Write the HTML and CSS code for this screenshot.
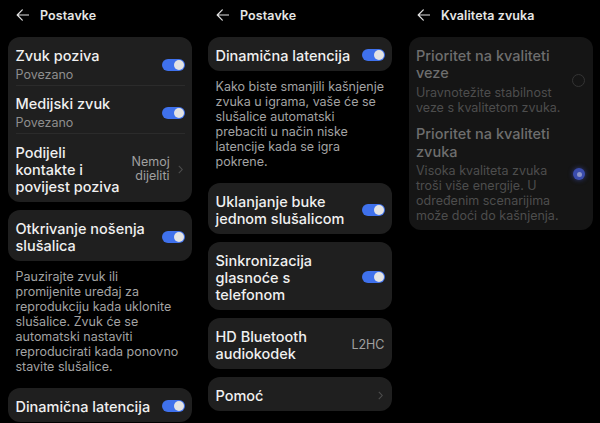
FILE: index.html
```html
<!DOCTYPE html>
<html lang="hr">
<head>
<meta charset="utf-8">
<title>Postavke</title>
<link rel="stylesheet" href="styles.css">
</head>
<body>
<div class="screens">

  <section class="screen">
    <header class="appbar">
      <svg class="back" width="13" height="12" viewBox="0 0 13 12"><path d="M12.5 6H1.2M6.3 0.9L1.2 6l5.1 5.1" fill="none" stroke="#e0e0e0" stroke-width="1.2" stroke-linecap="round" stroke-linejoin="round"/></svg>
      <h1 class="appbar-title">Postavke</h1>
    </header>
    <div class="card">
      <div class="row row-sub">
        <div class="text"><div class="title">Zvuk poziva</div><div class="sub">Povezano</div></div>
        <span class="switch"></span>
      </div>
      <div class="row row-sub">
        <div class="text"><div class="title">Medijski zvuk</div><div class="sub">Povezano</div></div>
        <span class="switch"></span>
      </div>
      <div class="row">
        <div class="text narrow"><div class="title">Podijeli kontakte i povijest poziva</div></div>
        <span class="value wrap">Nemoj dijeliti</span>
        <svg class="chev" width="5" height="9" viewBox="0 0 5 9"><path d="M0.8 0.8L4.2 4.5L0.8 8.2" fill="none" stroke="#4d4d4d" stroke-width="1.1"/></svg>
      </div>
    </div>
    <div class="card">
      <div class="row">
        <div class="text"><div class="title">Otkrivanje nošenja slušalica</div></div>
        <span class="switch"></span>
      </div>
    </div>
    <p class="note">Pauzirajte zvuk ili promijenite uređaj za reprodukciju kada uklonite slušalice. Zvuk će se automatski nastaviti reproducirati kada ponovno stavite slušalice.</p>
    <div class="card">
      <div class="row">
        <div class="text"><div class="title">Dinamična latencija</div></div>
        <span class="switch"></span>
      </div>
    </div>
  </section>

  <section class="screen">
    <header class="appbar">
      <svg class="back" width="13" height="12" viewBox="0 0 13 12"><path d="M12.5 6H1.2M6.3 0.9L1.2 6l5.1 5.1" fill="none" stroke="#e0e0e0" stroke-width="1.2" stroke-linecap="round" stroke-linejoin="round"/></svg>
      <h1 class="appbar-title">Postavke</h1>
    </header>
    <div class="card">
      <div class="row">
        <div class="text"><div class="title">Dinamična latencija</div></div>
        <span class="switch"></span>
      </div>
    </div>
    <p class="note">Kako biste smanjili kašnjenje zvuka u igrama, vaše će se slušalice automatski prebaciti u način niske latencije kada se igra pokrene.</p>
    <div class="card">
      <div class="row">
        <div class="text"><div class="title">Uklanjanje buke jednom slušalicom</div></div>
        <span class="switch"></span>
      </div>
    </div>
    <div class="card">
      <div class="row">
        <div class="text"><div class="title">Sinkronizacija glasnoće s telefonom</div></div>
        <span class="switch"></span>
      </div>
    </div>
    <div class="card">
      <div class="row">
        <div class="text"><div class="title">HD Bluetooth audiokodek</div></div>
        <span class="value">L2HC</span>
      </div>
    </div>
    <div class="card">
      <div class="row">
        <div class="text"><div class="title">Pomoć</div></div>
        <svg class="chev" width="5" height="9" viewBox="0 0 5 9"><path d="M0.8 0.8L4.2 4.5L0.8 8.2" fill="none" stroke="#4d4d4d" stroke-width="1.1"/></svg>
      </div>
    </div>
  </section>

  <section class="screen">
    <header class="appbar">
      <svg class="back" width="13" height="12" viewBox="0 0 13 12"><path d="M12.5 6H1.2M6.3 0.9L1.2 6l5.1 5.1" fill="none" stroke="#e0e0e0" stroke-width="1.2" stroke-linecap="round" stroke-linejoin="round"/></svg>
      <h1 class="appbar-title">Kvaliteta zvuka</h1>
    </header>
    <div class="card card-disabled">
      <div class="option">
        <div class="option-text">
          <div class="option-title">Prioritet na kvaliteti veze</div>
          <div class="option-sub">Uravnotežite stabilnost veze s kvalitetom zvuka.</div>
        </div>
        <span class="radio"></span>
      </div>
      <div class="option">
        <div class="option-text">
          <div class="option-title">Prioritet na kvaliteti zvuka</div>
          <div class="option-sub">Visoka kvaliteta zvuka troši više energije. U određenim scenarijima može doći do kašnjenja.</div>
        </div>
        <span class="radio radio-on"></span>
      </div>
    </div>
  </section>

</div>
</body>
</html>
```

FILE: styles.css
```css
html, body {
  margin: 0;
  padding: 0;
  background: #000;
}

body {
  width: 600px;
  height: 423px;
  overflow: hidden;
  font-family: Inter, "Noto Sans", "Liberation Sans", sans-serif;
  color: #f0f0f0;
}

.screens {
  display: flex;
}

.screen {
  flex: none;
  width: 200px;
  box-sizing: border-box;
  padding: 0 8px;
}

.screen + .screen + .screen {
  padding-left: 9px;
  padding-right: 7px;
}

.appbar {
  height: 30px;
  margin-bottom: 7px;
  display: flex;
  align-items: center;
  gap: 11px;
  padding-left: 8px;
}

.back {
  flex: none;
}

.appbar-title {
  margin: 0;
  font-size: 12.5px;
  font-weight: 600;
  color: #e6e6e6;
  letter-spacing: 0.1px;
}

.card {
  background: #1f1f1f;
  border-radius: 12px;
  margin-bottom: 8px;
}

.row {
  display: flex;
  align-items: center;
  gap: 8px;
  margin: 0 7.5px;
  padding: 9.5px 0 7.5px;
}

.row + .row {
  border-top: 1px solid #2b2b2b;
}

.row-sub {
  padding-bottom: 2px;
}

.text {
  flex: 1;
  min-width: 0;
}

.title {
  font-size: 14.5px;
  font-weight: 500;
  line-height: 17px;
  color: #f0f0f0;
  max-width: 138px;
}

.narrow .title {
  max-width: 108px;
}

.sub {
  margin-top: 3px;
  font-size: 12.5px;
  line-height: 16px;
  color: #8e8e8e;
}

.value {
  flex: none;
  font-size: 12.5px;
  line-height: 14px;
  color: #a0a0a0;
  text-align: right;
}

.value.wrap {
  width: 38px;
}

.chev {
  flex: none;
  margin-right: 2px;
}

.switch {
  flex: none;
  position: relative;
  width: 23px;
  height: 12px;
  border-radius: 6px;
  background: #3f71ec;
}

.switch::after {
  content: "";
  position: absolute;
  top: 1px;
  right: 1px;
  width: 10px;
  height: 10px;
  border-radius: 50%;
  background: #e3e3e3;
}

.note {
  margin: 0;
  padding: 0 7.5px 14px;
  font-size: 12.5px;
  line-height: 15px;
  color: #a3a3a3;
  max-width: 171px;
}

.card-disabled {
  background: #151515;
  padding-bottom: 7px;
}

.option {
  display: flex;
  align-items: center;
  gap: 8px;
  padding: 9.5px 8px 0 7px;
}

.option + .option {
  padding-top: 10.5px;
}

.option-text {
  flex: 1;
  min-width: 0;
  max-width: 150px;
}

.option-title {
  font-size: 14.5px;
  font-weight: 500;
  line-height: 17.5px;
  color: #6e6e6e;
}

.option-sub {
  margin-top: 3px;
  font-size: 12.5px;
  line-height: 15px;
  color: #4d4d4d;
}

.radio {
  flex: none;
  margin-left: auto;
  box-sizing: border-box;
  width: 13px;
  height: 13px;
  border-radius: 50%;
  border: 1.5px solid #343434;
}

.radio-on {
  position: relative;
  width: 12px;
  height: 12px;
  border: none;
  background: #3a4cad;
  box-shadow: 0 0 5px rgba(70, 90, 210, 0.6);
}

.radio-on::after {
  content: "";
  position: absolute;
  top: 3.5px;
  left: 3.5px;
  width: 5px;
  height: 5px;
  border-radius: 50%;
  background: #8d95c8;
}
```
